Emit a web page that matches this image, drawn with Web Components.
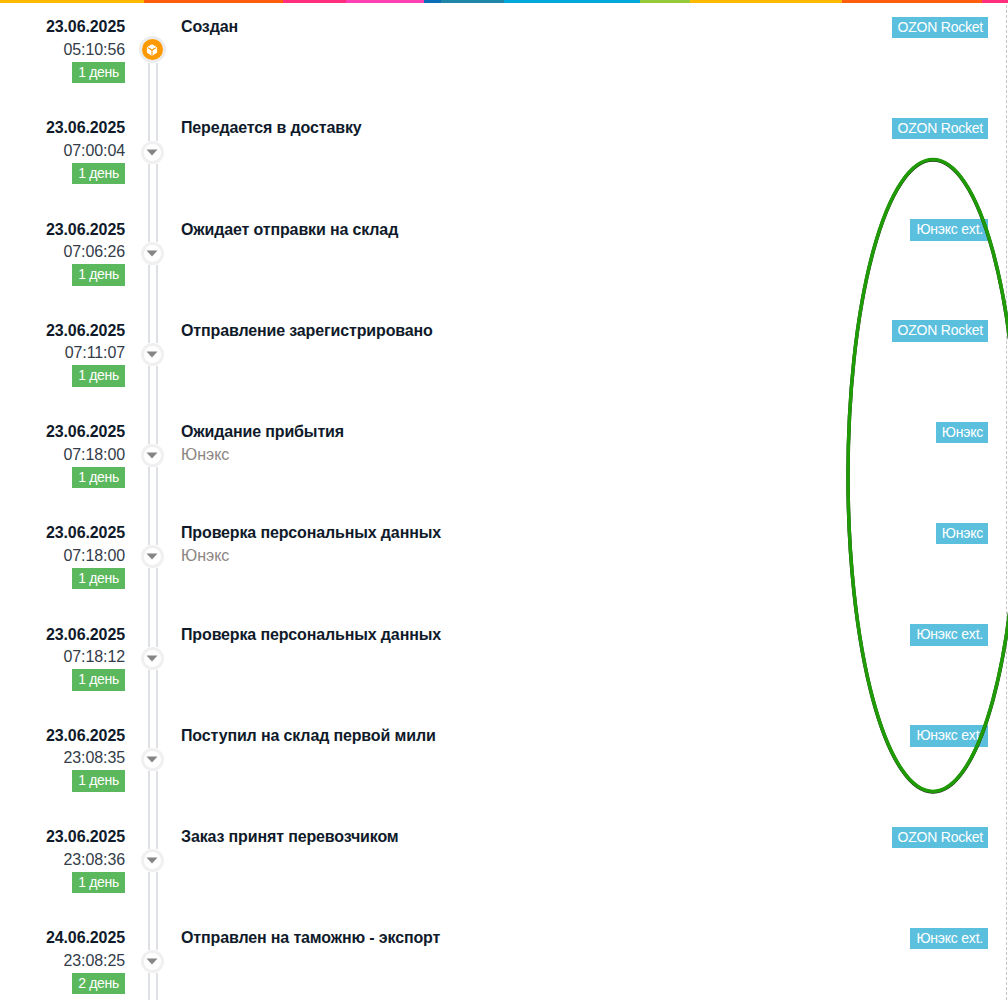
<!DOCTYPE html>
<html lang="ru">
<head>
<meta charset="utf-8">
<title>История заказа</title>
<style>
html, body { margin: 0; padding: 0; background: #fff; height: 1000px; overflow: hidden; }
</style>
</head>
<body>
<tracking-page>
	<color-strip></color-strip>
	<tracking-row date="23.06.2025" time="05:10:56" days="1 день" title="Создан" carrier="OZON Rocket" first></tracking-row>
	<tracking-row date="23.06.2025" time="07:00:04" days="1 день" title="Передается в доставку" carrier="OZON Rocket"></tracking-row>
	<tracking-row date="23.06.2025" time="07:06:26" days="1 день" title="Ожидает отправки на склад" carrier="Юнэкс ext."></tracking-row>
	<tracking-row date="23.06.2025" time="07:11:07" days="1 день" title="Отправление зарегистрировано" carrier="OZON Rocket"></tracking-row>
	<tracking-row date="23.06.2025" time="07:18:00" days="1 день" title="Ожидание прибытия" note="Юнэкс" carrier="Юнэкс"></tracking-row>
	<tracking-row date="23.06.2025" time="07:18:00" days="1 день" title="Проверка персональных данных" note="Юнэкс" carrier="Юнэкс"></tracking-row>
	<tracking-row date="23.06.2025" time="07:18:12" days="1 день" title="Проверка персональных данных" carrier="Юнэкс ext."></tracking-row>
	<tracking-row date="23.06.2025" time="23:08:35" days="1 день" title="Поступил на склад первой мили" carrier="Юнэкс ext."></tracking-row>
	<tracking-row date="23.06.2025" time="23:08:36" days="1 день" title="Заказ принят перевозчиком" carrier="OZON Rocket"></tracking-row>
	<tracking-row date="24.06.2025" time="23:08:25" days="2 день" title="Отправлен на таможню - экспорт" carrier="Юнэкс ext."></tracking-row>
	<marker-ellipse></marker-ellipse>
</tracking-page>
<script>
class TrackingPage extends HTMLElement {
	constructor() {
		super()
		this.attachShadow({ mode: "open" }).innerHTML = `
<style>
:host {
	display: block;
	position: relative;
	width: 1008px;
	height: 1000px;
	overflow: hidden;
	font-family: "Liberation Sans", Arial, sans-serif;
}
.rows {
	width: 1006px;
	height: 1000px;
	border-right: 1px dashed #c4c4c4;
	box-sizing: content-box;
}
</style>
<div class="rows"><slot></slot></div>
`
	}
}

class ColorStrip extends HTMLElement {
	constructor() {
		super()
		const parts = [
			[144, "#ffb900"], [139, "#ff5e0e"], [63, "#ff2d7e"], [78, "#ff40b4"],
			[17, "#0a6fb8"], [63, "#1f86a8"], [136, "#00a8dc"], [50, "#97c93c"],
			[152, "#ffb900"], [140, "#ff5e0e"], [26, "#ff2d7e"],
		]
		this.attachShadow({ mode: "open" }).innerHTML = `
<style>
:host { display: flex; height: 3px; margin-bottom: 12.25px; width: 1008px; }
span { display: block; height: 3px; }
</style>
${parts.map(([w, c]) => `<span style="width:${w}px;background:${c}"></span>`).join("")}
`
	}
}

const rowTemplate = document.createElement("template")
rowTemplate.innerHTML = `
<style>
:host {
	display: flex;
	height: 101.22px;
	padding-right: 18px;
	font-size: 16px;
	line-height: 23px;
	color: #0f1a2a;
}
.when {
	width: 125px;
	flex: none;
	display: flex;
	flex-direction: column;
	align-items: flex-end;
}
.date { font-weight: bold; letter-spacing: -0.1px; margin-bottom: -0.5px; }
.time { color: #333c48; letter-spacing: -0.1px; }
.days {
	margin-top: 1px;
	padding: 0 6px;
	height: 21.5px;
	line-height: 21px;
	font-size: 14px;
	letter-spacing: -0.3px;
	color: #fff;
	background: #5cb85c;
}
.track {
	width: 26px;
	flex: none;
	margin: 0 16px 0 14px;
	display: flex;
	flex-direction: column;
	align-items: center;
}
.rail {
	width: 10px;
	box-sizing: border-box;
	margin-left: 1px;
	border-left: 2px solid #dde1e6;
	border-right: 2px solid #dde1e6;
}
.rail.up { height: 24.1px; flex: none; }
.rail.down { flex: 1; }
:host([first]) .rail.up { visibility: hidden; height: 20.8px; }
.dot {
	width: 23px;
	height: 23px;
	flex: none;
	box-sizing: border-box;
	border: 3px solid #f0f0f0;
	border-radius: 50%;
	background: #fff;
	display: flex;
	align-items: center;
	justify-content: center;
}
:host([first]) .dot {
	width: 27px;
	height: 27px;
	border: 3.5px solid #ececec;
	background: #ff9900;
}
.dot svg { display: block; }
.what { flex: 1; }
.title { font-weight: bold; letter-spacing: -0.14px; }
.note { color: #8c8582; }
.carrier {
	flex: none;
	align-self: flex-start;
	margin-top: 1.5px;
	padding: 0 5px 0 6px;
	height: 21.5px;
	line-height: 21px;
	font-size: 14px;
	letter-spacing: -0.22px;
	color: #fff;
	background: #5bc0de;
}
</style>
<div class="when">
	<div class="date"></div>
	<div class="time"></div>
	<div class="days"></div>
</div>
<div class="track">
	<div class="rail up"></div>
	<div class="dot"></div>
	<div class="rail down"></div>
</div>
<div class="what">
	<div class="title"></div>
	<div class="note"></div>
</div>
<div class="carrier"></div>
`

const cubeIcon = `<svg width="12" height="12" viewBox="0 0 12 12"><path d="M6 .8 10.600 3.400v5.200L6 11.200 1.400 8.600V3.400z" fill="#fff" stroke="#fff" stroke-linejoin="round"/><path d="M2 3.700 6 6l4-2.300M6 6v5" fill="none" stroke="#ff9900" stroke-width="1.100"/></svg>`
const arrowIcon = `<svg width="12" height="7" viewBox="0 0 12 7"><path d="M.5.5h11L6 6.500z" fill="#858585"/></svg>`

class TrackingRow extends HTMLElement {
	constructor() {
		super()
		this.attachShadow({ mode: "open" }).appendChild(rowTemplate.content.cloneNode(true))
	}

	connectedCallback() {
		const root = this.shadowRoot
		root.querySelector(".date").textContent = this.getAttribute("date")
		root.querySelector(".time").textContent = this.getAttribute("time")
		root.querySelector(".days").textContent = this.getAttribute("days")
		root.querySelector(".title").textContent = this.getAttribute("title")
		root.querySelector(".note").textContent = this.getAttribute("note") || ""
		root.querySelector(".carrier").textContent = this.getAttribute("carrier")
		root.querySelector(".dot").innerHTML = this.hasAttribute("first") ? cubeIcon : arrowIcon
	}
}

// hand drawn oval that lies over the right column
class MarkerEllipse extends HTMLElement {
	constructor() {
		super()
		this.attachShadow({ mode: "open" }).innerHTML = `
<style>
:host { position: absolute; inset: 0; display: block; pointer-events: none; }
svg { display: block; }
</style>
<svg width="1008" height="1000" viewBox="0 0 1008 1000">
	<ellipse cx="933" cy="476" rx="85" ry="316" fill="none" stroke="#222" stroke-width="3.500"/>
	<ellipse cx="933" cy="475.500" rx="85" ry="316" fill="none" stroke="#1e9b05" stroke-width="3.500"/>
</svg>
`
	}
}

customElements.define("tracking-page", TrackingPage)
customElements.define("color-strip", ColorStrip)
customElements.define("tracking-row", TrackingRow)
customElements.define("marker-ellipse", MarkerEllipse)
</script>
</body>
</html>
